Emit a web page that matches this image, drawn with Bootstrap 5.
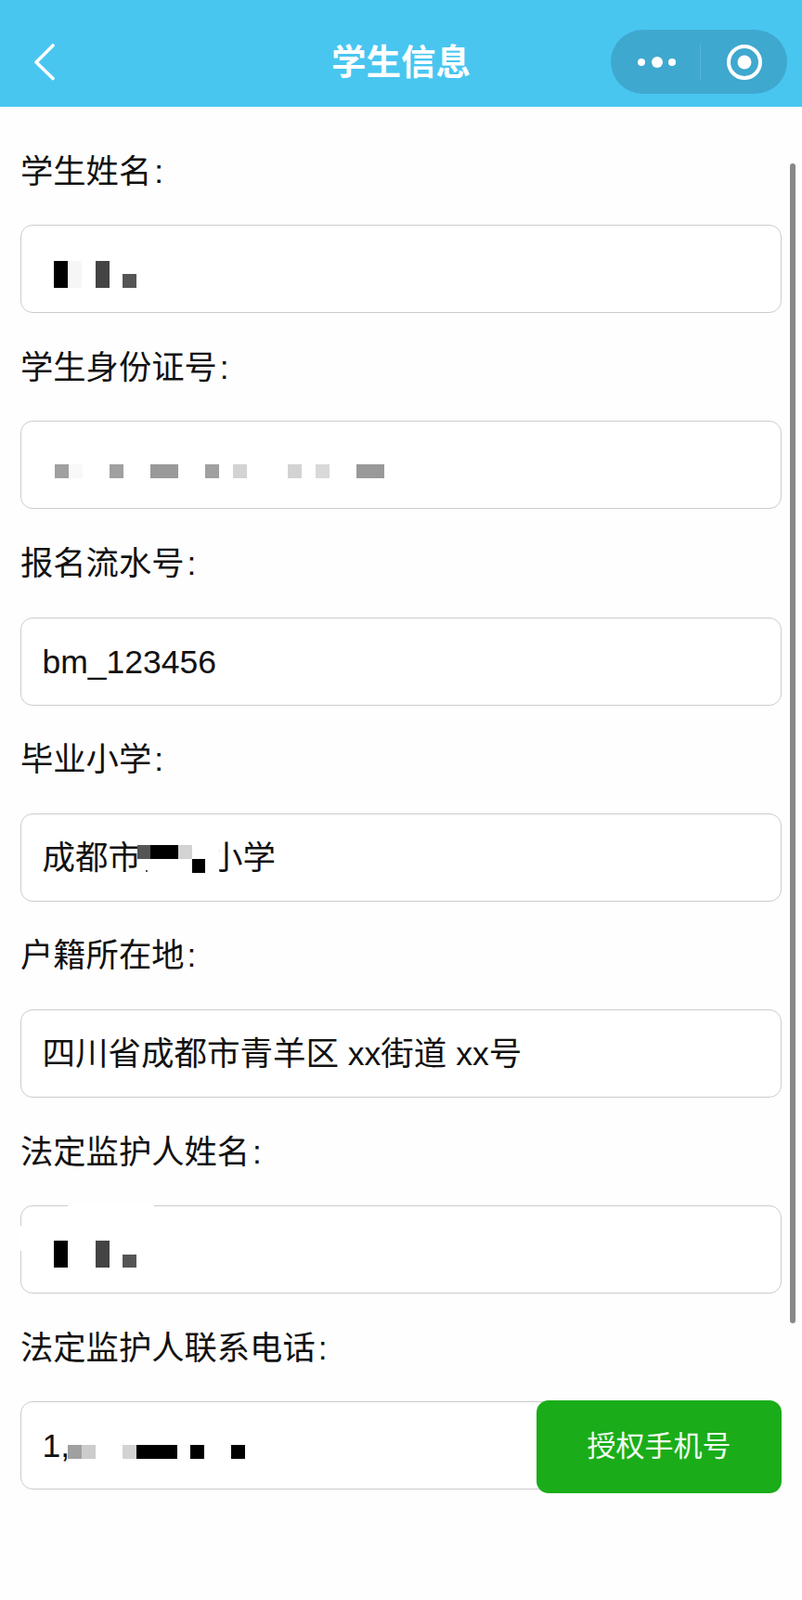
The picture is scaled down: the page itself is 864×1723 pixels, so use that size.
<!DOCTYPE html>
<html lang="zh-CN">
<head>
<meta charset="utf-8">
<title>学生信息</title>
<link href="https://cdn.jsdelivr.net/npm/bootstrap@5.3.0/dist/css/bootstrap.min.css" rel="stylesheet">
<style>
html, body { height: 1723px; overflow: hidden; }
body { background: #fefefe; color: #111; font-family: "Liberation Sans", "Noto Sans CJK SC", sans-serif; }
.top-bar { height: 115px; padding: 32px 16px 14px; background: #48c6f0; }
.top-side { flex: 0 0 190px; height: 69px; }
.top-title { font-size: 37.5px; font-weight: 700; color: #fff; line-height: 71px; }
.capsule { background: #3fa8cf; border-radius: 35px; }
.capsule-rule { width: 1px; height: 40px; background: #52b4d8; }
.sheet { padding: 41.6px 22px 0; }
.entry { margin-bottom: 30.6px; }
.entry-label { font-size: 35.3px; line-height: 55px; height: 55px; margin-bottom: 30.6px; white-space: nowrap; }
.entry-label i { font-style: normal; margin-left: 3px; }
.entry-box.form-control { height: 95px; padding: 0 0 0 22.5px; font-size: 35.5px; line-height: 94px; color: #111; background: #fff; border: 1.5px solid #ccc; border-radius: 13px; white-space: nowrap; }
.cover { position: absolute; left: -1.5px; top: -1.5px; width: 100%; height: 100%; overflow: visible; }
.gap-name { margin-left: 74px; }
.auth-btn.btn { position: absolute; right: 0; top: -1.5px; width: 264px; height: 100px; padding: 0; font-size: 31px; color: #f2fbf2; background: #1aad19; border: 0; border-radius: 13px; }
.scroll-thumb { position: absolute; left: 851px; top: 176px; width: 6px; height: 1249px; background: #888; border-radius: 3px; }
</style>
</head>
<body>
<nav class="top-bar d-flex align-items-start">
  <div class="top-side d-flex align-items-center">
    <svg width="43" height="69" viewBox="0 0 43 69" aria-hidden="true"><polyline points="41,17 23,35 41,52.5" fill="none" stroke="#fff" stroke-width="3.6" stroke-linecap="round" stroke-linejoin="round"/></svg>
  </div>
  <div class="top-title flex-grow-1 text-center">学生信息</div>
  <div class="top-side capsule d-flex align-items-center">
    <svg width="96" height="69" viewBox="0 0 96 69" aria-hidden="true"><circle cx="33" cy="35" r="4" fill="#fff"/><circle cx="50" cy="35" r="6" fill="#fff"/><circle cx="66" cy="35" r="4" fill="#fff"/></svg>
    <span class="capsule-rule"></span>
    <svg width="93" height="69" viewBox="0 0 93 69" aria-hidden="true"><circle cx="47" cy="35" r="17" fill="none" stroke="#fff" stroke-width="4"/><circle cx="47" cy="35" r="7.5" fill="#fff"/></svg>
  </div>
</nav>

<main class="sheet">
  <div class="entry">
    <div class="entry-label">学生姓名<i>:</i></div>
    <div class="entry-box form-control position-relative">
      <svg class="cover" aria-hidden="true" shape-rendering="crispEdges"><rect x="36" y="39" width="15" height="29" fill="#000"/><rect x="51" y="39" width="15" height="29" fill="#f6f6f6"/><rect x="80.5" y="39" width="15" height="29" fill="#444"/><rect x="110" y="53" width="15" height="15" fill="#555"/></svg>
    </div>
  </div>
  <div class="entry">
    <div class="entry-label">学生身份证号<i>:</i></div>
    <div class="entry-box form-control position-relative">
      <svg class="cover" aria-hidden="true" shape-rendering="crispEdges"><rect x="37" y="47" width="15" height="15" fill="#a0a0a0"/><rect x="52" y="47" width="15" height="15" fill="#f9f9f9"/><rect x="96" y="47" width="15" height="15" fill="#a0a0a0"/><rect x="140" y="47" width="30" height="15" fill="#999"/><rect x="199" y="47" width="15" height="15" fill="#a0a0a0"/><rect x="229" y="47" width="15" height="15" fill="#d3d3d3"/><rect x="288" y="47" width="15" height="15" fill="#d3d3d3"/><rect x="318" y="47" width="15" height="15" fill="#d9d9d9"/><rect x="361.5" y="47" width="30" height="15" fill="#999"/></svg>
    </div>
  </div>
  <div class="entry">
    <div class="entry-label">报名流水号<i>:</i></div>
    <div class="entry-box form-control">bm_123456</div>
  </div>
  <div class="entry">
    <div class="entry-label">毕业小学<i>:</i></div>
    <div class="entry-box form-control position-relative">成都市<span class="gap-name">小学</span>
      <svg class="cover" aria-hidden="true" shape-rendering="crispEdges"><rect x="199" y="25" width="15" height="45" fill="#fff"/><rect x="125.6" y="35.4" width="15" height="14.5" fill="#555"/><rect x="140" y="35.4" width="30" height="14.5" fill="#000"/><rect x="170" y="35.4" width="14.5" height="14.5" fill="#d3d3d3"/><rect x="184.5" y="49.7" width="14.5" height="15" fill="#000"/><rect x="135" y="62" width="2" height="2" fill="#555"/></svg>
    </div>
  </div>
  <div class="entry">
    <div class="entry-label">户籍所在地<i>:</i></div>
    <div class="entry-box form-control">四川省成都市青羊区 xx街道 xx号</div>
  </div>
  <div class="entry">
    <div class="entry-label">法定监护人姓名<i>:</i></div>
    <div class="entry-box form-control position-relative">
      <svg class="cover" aria-hidden="true" shape-rendering="crispEdges"><rect x="51" y="-1" width="93" height="4" fill="#fff"/><rect x="-1" y="22" width="4" height="27" fill="#fff"/><rect x="36" y="38" width="15" height="29" fill="#000"/><rect x="80.5" y="38" width="15" height="29" fill="#444"/><rect x="110" y="53" width="15" height="14" fill="#555"/></svg>
    </div>
  </div>
  <div class="entry">
    <div class="entry-label">法定监护人联系电话<i>:</i></div>
    <div class="position-relative">
      <div class="entry-box form-control position-relative">1,
        <svg class="cover" aria-hidden="true" shape-rendering="crispEdges"><rect x="51" y="47" width="15" height="14.5" fill="#a0a0a0"/><rect x="66" y="47" width="14.5" height="14.5" fill="#ccc"/><rect x="110" y="47" width="15" height="14.5" fill="#d3d3d3"/><rect x="124.6" y="47" width="44" height="14.5" fill="#000"/><rect x="183" y="47" width="14.6" height="14.5" fill="#000"/><rect x="227" y="47" width="14.6" height="14.5" fill="#000"/></svg>
      </div>
      <button type="button" class="auth-btn btn btn-success">授权手机号</button>
    </div>
  </div>
</main>
<div class="scroll-thumb"></div>
<script src="https://cdn.jsdelivr.net/npm/bootstrap@5.3.0/dist/js/bootstrap.bundle.min.js"></script>
</body>
</html>
